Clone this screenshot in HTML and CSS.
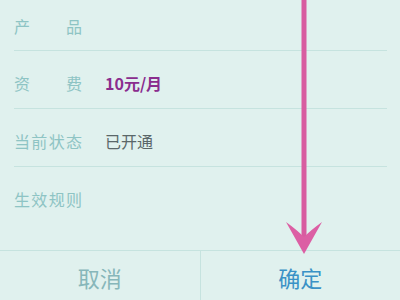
FILE: index.html
```html
<!DOCTYPE html>
<html lang="zh-CN">
<head>
  <meta charset="UTF-8">
  <title>业务详情</title>
  <link rel="stylesheet" href="styles.css">
</head>
<body>

<div class="detail">
  <div class="row first">
    <span class="label">产品</span>
    <span class="value"></span>
  </div>
  <div class="row">
    <span class="label">资费</span>
    <span class="value price">10元/月</span>
  </div>
  <div class="row">
    <span class="label">当前状态</span>
    <span class="value">已开通</span>
  </div>
  <div class="row last">
    <span class="label">生效规则</span>
    <span class="value"></span>
  </div>
</div>

<div class="actions">
  <button class="cancel">取消</button>
  <button class="ok">确定</button>
</div>

<svg class="arrow" width="44" height="260" viewBox="0 0 44 260">
  <rect x="17.5" y="0" width="5" height="242" fill="#d85ca0"/>
  <path d="M2 222 Q13 230 20 237 Q27 230 38 222 L20 254 Z" fill="#dc5fa4"/>
</svg>

</body>
</html>
```

FILE: styles.css
```css
body {
  margin: 0;
  width: 400px;
  height: 300px;
  overflow: hidden;
  background: #e0f1ee;
  font-family: "Noto Sans CJK SC", "Noto Sans", sans-serif;
  position: relative;
}

.detail {
  padding: 0 13px 0 14px;
}

.row {
  display: flex;
  align-items: center;
  height: 58px;
  box-sizing: border-box;
  padding-top: 6px;
  border-bottom: 1px solid #c6e3df;
  font-size: 16px;
}

.row.first {
  height: 51px;
  padding-top: 2px;
}

.row.last {
  height: 83px;
  padding-top: 0;
  padding-bottom: 20px;
  border-bottom: none;
}

.label {
  width: 68px;
  text-align: justify;
  text-align-last: justify;
  color: #8ec4c4;
  margin-right: 23px;
}

.value {
  color: #5a6769;
}

.value.price {
  color: #8a2d8e;
  font-weight: bold;
}

.actions {
  display: flex;
  border-top: 1px solid #c6e3df;
}

.actions button {
  flex: 1;
  height: 60px;
  border: none;
  background: none;
  font-family: inherit;
  font-size: 22px;
  padding: 0 0 8px;
}

.cancel {
  color: #87b7ba;
  border-right: 1px solid #c6e3df !important;
}

.ok {
  color: #3a92c6;
}

.arrow {
  position: absolute;
  left: 284px;
  top: 0;
}
```
